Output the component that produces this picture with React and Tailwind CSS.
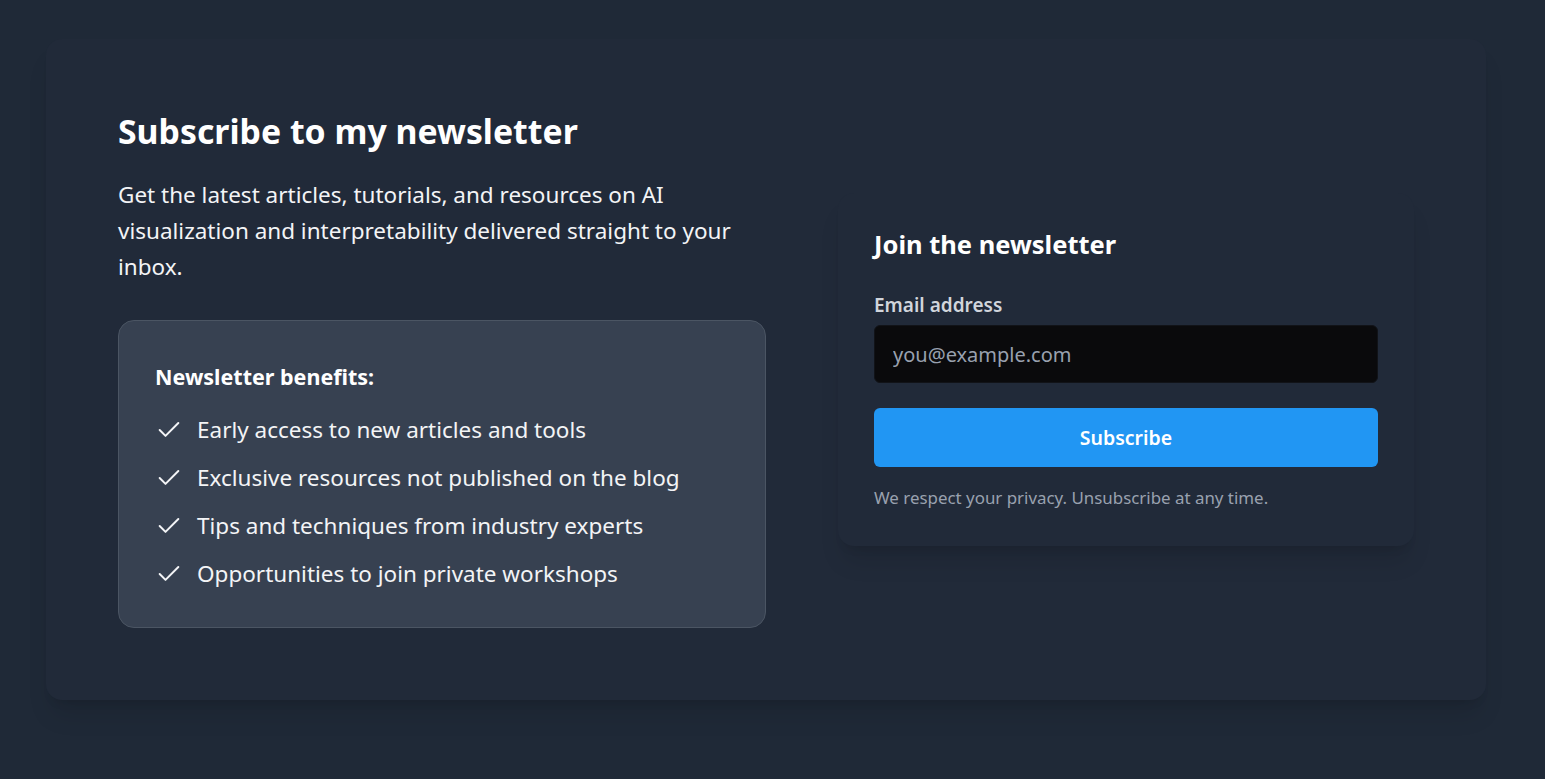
import React from "react";

function Check() {
  return (
    <svg width="28" height="28" viewBox="0 0 24 24" fill="none" stroke="currentColor" strokeWidth="1.7" strokeLinecap="round" strokeLinejoin="round" className="shrink-0">
      <path d="M20 6 9 17l-5-5" />
    </svg>
  );
}

const benefits = [
  "Early access to new articles and tools",
  "Exclusive resources not published on the blog",
  "Tips and techniques from industry experts",
  "Opportunities to join private workshops",
];

export default function App() {
  return (
    <div
      className="min-h-screen bg-[#1f2937] text-white"
      style={{ fontFamily: '"Segoe UI", "Noto Sans", sans-serif' }}
    >
      <div className="w-[1532px] pt-[39px] pb-20 flex justify-center">
        <div className="w-[1440px] rounded-2xl bg-[#212a39] shadow-xl p-18 grid grid-cols-2 items-center">
          <div>
            <h1 className="text-[33.8px] leading-10 font-bold text-white">Subscribe to my newsletter</h1>
            <p className="mt-[26px] text-[22.5px] leading-9 text-gray-100">
              Get the latest articles, tutorials, and resources on AI visualization and interpretability delivered straight to your inbox.
            </p>
            <div className="mt-[35px] rounded-2xl border border-[#4b5563] bg-[#374151] px-9 pt-[42px] pb-[39px]">
              <h3 className="text-[21.5px] leading-7 font-bold text-white">Newsletter benefits:</h3>
              <ul className="mt-[25px] flex flex-col gap-5">
                {benefits.map((b) => (
                  <li key={b} className="flex items-center gap-[14px] text-[22.5px] leading-7 text-gray-100">
                    <Check />
                    <span>{b}</span>
                  </li>
                ))}
              </ul>
            </div>
          </div>
          <div className="flex justify-end">
            <div className="w-full max-w-xl rounded-2xl bg-[#212a39] shadow-xl pt-[35px] px-9 pb-9">
              <h2 className="text-[25.5px] leading-8 font-bold text-white">Join the newsletter</h2>
              <label className="block mt-[31px] mb-[6px] text-[19px] leading-7 font-semibold text-gray-300">Email address</label>
              <input
                type="email"
                placeholder="you@example.com"
                className="block w-full h-[58px] rounded-md bg-[#0a0a0c] border border-[#111318] px-[18px] text-xl text-white placeholder:text-gray-400 outline-none"
              />
              <button className="mt-[25px] w-full h-[59px] rounded-md bg-[#2196f3] text-[19.5px] font-semibold text-white">
                Subscribe
              </button>
              <p className="mt-[19px] text-[16.9px] leading-6 text-gray-400">We respect your privacy. Unsubscribe at any time.</p>
            </div>
          </div>
        </div>
      </div>
    </div>
  );
}
